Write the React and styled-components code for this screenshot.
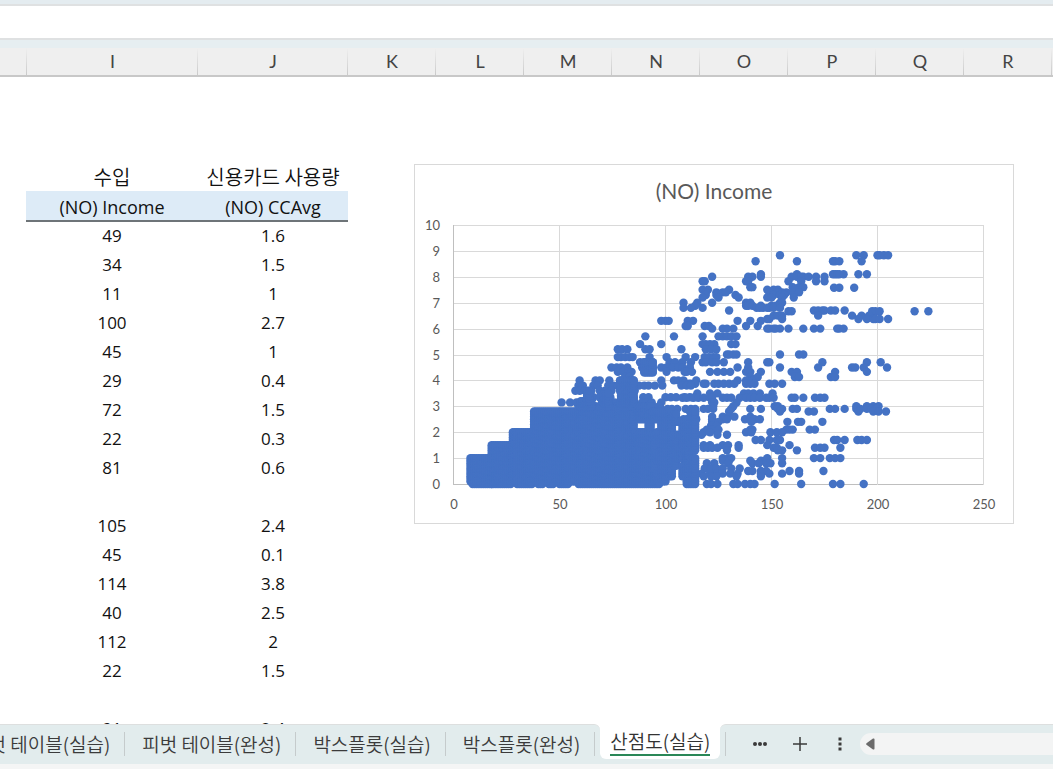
import React from 'react';
import styled, {createGlobalStyle} from 'styled-components';

const GlobalStyle = createGlobalStyle`
*{
box-sizing: border-box;
}
body{
margin: 0;
background-color: #FFFFFF;
font-family: 'Open Sans', 'Noto Sans CJK KR', sans-serif;
}
`
const Container = styled.div`
display: flex;
flex-flow: column;
height: 100vh;
width: 100%;
overflow: hidden;
background-color: #FFFFFF;
`
const RibbonEdge = styled.div`
flex: none;
height: 6px;
background-color: #E4ECF0;
border-bottom: solid 2px #DFE1E2;
`
const FormulaBar = styled.div`
flex: none;
height: 34px;
background-color: white;
border-bottom: solid 2px #DFE1E2;
`
const FormulaGap = styled.div`
flex: none;
height: 8px;
background-color: #E6EEF1;
`
const ColumnBar = styled.div`
display: flex;
flex: none;
height: 29px;
overflow: hidden;
background-color: #EFEFEF;
border-bottom: solid 2px #C8C8C8;
`
const ColumnHead = styled.div`
display: flex;
flex: none;
justify-content: center;
align-items: center;
width: ${props => props.$width}px;
color: #444444;
font-family: 'Lato', sans-serif;
font-size: 18px;
line-height: 27px;
background: linear-gradient(#EFEFEF, #CACACA) right / 1px 100% no-repeat;
`
const Sheet = styled.div`
display: flex;
flex: 1;
align-items: flex-start;
min-height: 0;
overflow: hidden;
padding-top: 85px;
`
const DataTable = styled.table`
flex: none;
margin-left: 26px;
border-collapse: collapse;
table-layout: fixed;
width: 322px;
color: #111111;
font-size: 17px;
line-height: 28px;
text-align: center;
`
const Row = styled.tr`
height: 29px;
`
const Caption = styled.th`
padding: 0;
width: ${props => props.$width}px;
font-family: 'Noto Sans CJK KR', sans-serif;
font-size: 20px;
font-weight: 350;
`
const Field = styled.th`
padding: 2px 0 0;
height: 30px;
font-size: 18px;
font-weight: 400;
line-height: 26px;
background-color: #DDEBF7;
border-bottom: solid 2px #6E7478;
`
const Cell = styled.td`
padding: 0;
`
const ChartBox = styled.div`
flex: none;
width: 600px;
margin-top: 2px;
margin-left: 66px;
border: solid 1px #D9D9D9;
background-color: white;
svg{
display: block;
width: 100%;
}
`
const ChartTitle = styled.h2`
margin: 0;
padding-top: 12px;
height: 47px;
color: #595959;
font-family: 'Lato', sans-serif;
font-size: 21px;
font-weight: 400;
line-height: 28px;
text-align: center;
`
const Tick = styled.text`
fill: #595959;
font-family: 'Lato', sans-serif;
font-size: 13px;
text-anchor: ${props => props.$anchor};
`
const TabBar = styled.div`
display: flex;
flex: none;
height: 40px;
overflow: hidden;
background: linear-gradient(#FFFFFF 12px, #E2ECED 12px);
`
const TabGroup = styled.div`
display: flex;
flex: none;
padding: 7px 5px 8px 0;
border-top: solid 1px #DDDFDF;
border-top-right-radius: 6px;
margin-left: -46px;
background-color: #E2ECED;
`
const Tab = styled.button`
height: 24px;
padding: 0 14px 0 17px;
border: none;
border-right: solid 1px #C5CBCC;
background: none;
color: #3B3B3B;
font-family: 'Noto Sans CJK KR', sans-serif;
font-size: 19px;
font-weight: 350;
line-height: 24px;
white-space: nowrap;
`
const ActiveTab = styled.button`
flex: none;
height: 35px;
padding: 4px 10px;
border: none;
border-radius: 0 0 6px 6px;
background-color: white;
color: #333333;
font-family: 'Noto Sans CJK KR', sans-serif;
font-size: 19px;
font-weight: 350;
line-height: 26px;
white-space: nowrap;
span{
display: block;
height: 28px;
border-bottom: solid 2px #2A8757;
}
`
const Tools = styled.div`
display: flex;
flex: 1;
align-items: center;
padding: 0 0 2px 5px;
border-top: solid 1px #DDDFDF;
border-top-left-radius: 6px;
background-color: #E2ECED;
`
const Divider = styled.div`
width: 1px;
height: 24px;
margin-right: 14px;
background-color: #C5CBCC;
`
const ToolButton = styled.button`
display: flex;
justify-content: center;
align-items: center;
width: 40px;
height: 24px;
padding: 0;
border: none;
background: none;
color: #3A3A3A;
`
const ScrollTrack = styled.div`
display: flex;
flex: 1;
align-items: center;
height: 22px;
padding-left: 6px;
border-radius: 11px 0 0 11px;
background-color: #F3F4F4;
`
const StatusEdge = styled.div`
flex: none;
height: 5px;
background-color: #F4F5F5;
`

const columns = [
    {name: '', width: 27}, {name: 'I', width: 171}, {name: 'J', width: 150}, {name: 'K', width: 88},
    {name: 'L', width: 88}, {name: 'M', width: 88}, {name: 'N', width: 88}, {name: 'O', width: 88},
    {name: 'P', width: 88}, {name: 'Q', width: 88}, {name: 'R', width: 88}, {name: '', width: 88}
];

const rows = [
    ['49', '1.6'], ['34', '1.5'], ['11', '1'], ['100', '2.7'], ['45', '1'], ['29', '0.4'],
    ['72', '1.5'], ['22', '0.3'], ['81', '0.6'], ['', ''], ['105', '2.4'], ['45', '0.1'],
    ['114', '3.8'], ['40', '2.5'], ['112', '2'], ['22', '1.5'], ['', ''], ['91', '2.4']
];

const tabs = ['피벗 테이블(실습)', '피벗 테이블(완성)', '박스플롯(실습)', '박스플롯(완성)'];

// [CCAvg, incomes with that CCAvg]
const points = [
    [8.83, [154, 190, 193.5, 200, 201, 203, 205]],
    [8.6, [142.5, 162, 179, 180, 182, 192.5]],
    [8.1, [145, 162, 179, 180, 181, 182, 184, 191, 195]],
    [8.0, [122, 139, 141, 145, 159.5, 162, 164, 165, 167.5, 171, 175]],
    [7.83, [117.5, 118.5, 138, 139, 158, 164, 171, 175]],
    [7.6, [140, 141, 160, 163, 165]],
    [7.58, [179.5, 182, 189]],
    [7.5, [117.5, 120, 130, 148, 151, 153, 161]],
    [7.4, [119, 124, 127, 128.5, 149, 151, 153, 155, 157, 160, 163]],
    [7.3, [119, 124, 133, 151, 154, 156]],
    [7.2, [117.5, 125, 134.5, 148, 150, 155, 160.5]],
    [7.0, [108.5, 115, 122, 138, 140, 154, 155]],
    [6.88, [114, 138, 139, 141, 145, 150, 152, 154]],
    [6.8, [108.5, 112, 117.5, 143, 144.5, 146, 148, 149, 151, 154]],
    [6.7, [130, 170, 172, 174, 175, 178, 180, 184.5]],
    [6.67, [158, 159.5, 197.5, 199, 201, 217.5, 224]],
    [6.5, [151, 153, 155, 172, 188, 192.5, 196]],
    [6.37, [148, 149, 155, 191, 195, 198, 199, 201, 205]],
    [6.3, [98, 100, 101.5, 110.5, 113, 134, 140, 145]],
    [6.1, [109.5, 110.5, 118.5, 120.5, 138, 143.5]],
    [6.0, [122, 127, 129, 132, 148, 149, 151, 152, 154, 158, 165, 170, 173, 181, 182, 184]],
    [5.7, [90.5, 104, 117.5, 125, 127, 129, 131, 133.5]],
    [5.4, [88, 98, 117.5, 119, 121, 123, 131, 133]],
    [5.2, [77.5, 79.5, 82, 90.5, 92.5, 107.5, 119, 121.5, 124]],
    [5.0, [129, 130, 132, 133.5, 154, 163, 165]],
    [4.9, [77.5, 79, 81, 83, 84.5, 92.5, 100.5, 109.5, 114, 118.5, 120.5, 122.5, 124]],
    [4.7, [88, 90, 92.5, 94, 102, 104.5, 108, 112, 117.5, 119, 122, 124, 127.5, 139, 148, 149, 174, 195, 201.5]],
    [4.5, [74.5, 77, 79, 82, 89, 91, 94, 98, 100.5, 103.5, 106, 108, 111.5, 134, 139, 154, 172, 188, 189.5, 193.5, 204.5]],
    [4.33, [77.5, 80, 82.5, 84, 90, 92.5, 94, 100.5, 109, 110, 112.5, 121, 124.5, 127.5, 130.5, 138, 140, 145, 159.5, 162, 180, 195]],
    [4.13, [81, 83, 140, 143.5, 161, 163, 178, 180]],
    [4.0, [59.5, 67, 69, 73.5, 78.5, 81, 83, 85, 98, 104, 106, 108.5, 114.5, 134, 138, 141]],
    [3.87, [109, 111, 112, 114, 118, 119, 123, 125, 127.5, 130, 132.5, 138, 140, 142, 149, 151.5, 155]],
    [3.8, [59, 61, 66, 68, 73, 75.5, 77.5, 80, 82, 85, 87.5, 90, 92, 95, 98.5, 107.5, 110, 112]],
    [3.6, [57.5, 59.5, 62, 65, 69, 71.5, 74.5, 78.5, 80, 82, 84, 85.5]],
    [3.5, [115, 121, 124.5, 137, 139, 141.5, 144.5, 150.5]],
    [3.35, [63.5, 66, 69, 72, 74, 80, 81, 83, 85, 89.5, 92, 100, 102.5, 105, 109, 111.5, 114]],
    [3.33, [108, 110, 113, 115.5, 118, 121, 122, 127, 129, 131, 135, 138, 140, 142, 144.5, 147.5, 149, 151, 159.5, 161, 165, 170.5, 173, 175]],
    [3.15, [51, 55, 58, 61, 63, 65, 70, 74, 76, 80, 82, 84, 85.5, 89, 91, 93.5, 98, 122, 123, 133.5]],
    [3.0, [59, 61, 63, 65, 67, 69, 71, 73, 75, 77, 79, 81, 83, 85, 88, 90, 92, 94, 97, 122.5, 132, 151.5, 153, 190, 195, 198, 200.5]],
    [2.9, [98, 101, 103, 105.5, 109.5, 112, 114, 118, 120, 122.5, 131, 140, 145, 153, 155, 160, 162, 177.5, 180, 184.5, 190, 192, 195, 197, 199.5]],
    [2.8, [111.5, 114, 130, 154, 167.5, 170, 191, 198, 200.5, 204]],
    [2.6, [122, 127, 129.5, 132.5, 140]],
    [2.5, [108.5, 111.5, 114.5, 122, 127, 129, 137.5, 140, 142, 144.5]],
    [2.4, [122, 125, 140.5, 157.5, 162.5, 164, 174]],
    [2.25, [121.5, 124]],
    [2.1, [119.5, 122, 125, 140, 141, 157, 158.5, 160, 168, 170.5]],
    [2.0, [118, 121, 138, 140.5, 149.5, 152.5, 155]],
    [1.9, [117, 124.5, 129]],
    [1.7, [142.5, 145, 149, 152.5, 154, 179.5, 181, 184.5, 190.5, 192.5, 195]],
    [1.5, [118, 121, 127, 129.5, 134.5, 148, 158.5]],
    [1.4, [118, 120, 122, 124.5, 129, 134.5, 151, 152.5, 170.5, 173, 175, 182.5]],
    [1.3, [129, 153, 155, 162]],
    [1.0, [127, 129.5, 131, 148, 155, 170, 173, 177.5, 180, 182.5]],
    [0.9, [127, 130, 140, 145, 147]],
    [0.8, [119.5, 123, 129.5, 141, 144, 147.5, 149.5, 155]],
    [0.6, [118.5, 121.5, 124, 127, 131, 135]],
    [0.5, [139, 141, 145, 147.5, 158.5, 163, 174.5]],
    [0.4, [117, 121, 124, 127, 130.5, 134, 145, 149, 155, 163]],
    [0.3, [118, 121.5, 124, 133.5, 145]],
    [0, [119.5, 121.5, 124.5, 132, 134, 137.5, 140, 142, 151.5, 164, 179, 182.5, 193.5]]
];

// crowded part of the data: every income in the range, from low to high CCAvg
const clusters = [
    {from: 8, to: 9, low: 0.1, high: 1},
    {from: 9, to: 18, low: 0, high: 1},
    {from: 18, to: 27, low: 0, high: 1.5},
    {from: 28, to: 30, low: 0.1, high: 2},
    {from: 30, to: 37, low: 0, high: 2},
    {from: 38, to: 39, low: 0.1, high: 2.8},
    {from: 40, to: 42, low: 0, high: 2.8},
    {from: 43, to: 44, low: 0.1, high: 2.8},
    {from: 45, to: 47, low: 0, high: 2.8},
    {from: 48, to: 49, low: 0.1, high: 2.8},
    {from: 50, to: 54, low: 0, high: 2.8},
    {from: 55, to: 58, low: 0.1, high: 2.8},
    {from: 59, to: 85, low: 0, high: 2.9},
    {from: 60, to: 65, low: 3, high: 3.2},
    {from: 63, to: 64, low: 3.2, high: 3.6},
    {from: 71, to: 73, low: 3, high: 3.5},
    {from: 79, to: 85, low: 3, high: 4},
    {from: 86, to: 91, low: 0, high: 2},
    {from: 87, to: 92, low: 2.5, high: 3},
    {from: 90, to: 94, low: 4.3, high: 4.7},
    {from: 92, to: 93, low: 0, high: 3},
    {from: 94, to: 95, low: 0, high: 1.9},
    {from: 94, to: 97, low: 2.5, high: 2.8},
    {from: 96, to: 97, low: 0, high: 0.4},
    {from: 96, to: 97, low: 0.9, high: 1.2},
    {from: 96, to: 97, low: 1.7, high: 2},
    {from: 98, to: 100, low: 0.1, high: 2.8},
    {from: 101, to: 103, low: 0.3, high: 2.8},
    {from: 104, to: 105, low: 0.7, high: 1.9},
    {from: 104, to: 105, low: 2.4, high: 2.7},
    {from: 106, to: 108, low: 1, high: 1.4},
    {from: 106, to: 108, low: 1.8, high: 1.9},
    {from: 106, to: 107, low: 2.4, high: 2.4},
    {from: 108, to: 109, low: 0.3, high: 0.7},
    {from: 108, to: 109, low: 1.2, high: 2.4},
    {from: 110, to: 111, low: 0, high: 2.5},
    {from: 112, to: 114, low: 0, high: 1},
    {from: 112, to: 114, low: 1.3, high: 2.8}
];

const toX = income => 38.5 + income * 2.12;
const toY = ccavg => 272 - ccavg * 25.9;

const dots = [];
points.forEach(([ccavg, incomes]) => {
    incomes.forEach(income => dots.push([toX(income), toY(ccavg)]));
});
clusters.forEach(c => {
    for (let income = c.from; income <= c.to; income++) {
        for (let v = Math.round(c.low * 10); v <= Math.round(c.high * 10); v++) {
            dots.push([toX(income), toY(v / 10)]);
        }
    }
});

const yTicks = [0, 1, 2, 3, 4, 5, 6, 7, 8, 9, 10];
const xTicks = [0, 50, 100, 150, 200, 250];

function ScatterChart() {
    return (
        <ChartBox>
            <ChartTitle>(NO) Income</ChartTitle>
            <svg viewBox="0 0 598 311" role="img" aria-label="(NO) Income">
                {yTicks.map(v => (
                    <line key={v} x1="38" x2="569" y1={Math.round(toY(v)) + 0.5} y2={Math.round(toY(v)) + 0.5}
                          stroke={v === 0 ? '#BFBFBF' : '#D9D9D9'}/>
                ))}
                {xTicks.map(v => (
                    <line key={v} x1={Math.floor(toX(v)) + 0.5} x2={Math.floor(toX(v)) + 0.5} y1="13" y2="273"
                          stroke={v === 0 ? '#BFBFBF' : '#D9D9D9'}/>
                ))}
                <g fill="#4472C4">
                    {dots.map(([x, y], index) => <circle key={index} cx={x} cy={y} r="4.2"/>)}
                </g>
                {yTicks.map(v => <Tick key={v} $anchor="end" x="25" y={Math.round(toY(v)) + 5}>{v}</Tick>)}
                {xTicks.map(v => <Tick key={v} $anchor="middle" x={Math.floor(toX(v)) + 1} y="297">{v}</Tick>)}
            </svg>
        </ChartBox>
    );
}

function App() {
    return (
        <Container>
            <GlobalStyle/>
            <RibbonEdge/>
            <FormulaBar/>
            <FormulaGap/>
            <ColumnBar>
                {columns.map((item, index) => (
                    <ColumnHead key={index} $width={item.width}>{item.name}</ColumnHead>
                ))}
            </ColumnBar>
            <Sheet>
                <DataTable>
                    <thead>
                        <Row>
                            <Caption $width={172}>수입</Caption>
                            <Caption $width={150}>신용카드 사용량</Caption>
                        </Row>
                        <Row>
                            <Field>(NO) Income</Field>
                            <Field>(NO) CCAvg</Field>
                        </Row>
                    </thead>
                    <tbody>
                        {rows.map((row, index) => (
                            <Row key={index}>
                                <Cell>{row[0]}</Cell>
                                <Cell>{row[1]}</Cell>
                            </Row>
                        ))}
                    </tbody>
                </DataTable>
                <ScatterChart/>
            </Sheet>
            <TabBar>
                <TabGroup>
                    {tabs.map(name => <Tab key={name}>{name}</Tab>)}
                </TabGroup>
                <ActiveTab><span>산점도(실습)</span></ActiveTab>
                <Tools>
                    <Divider/>
                    <ToolButton aria-label="more sheets">
                        <svg width="16" height="6" fill="currentColor">
                            <circle cx="3" cy="3" r="2"/>
                            <circle cx="8" cy="3" r="2"/>
                            <circle cx="13" cy="3" r="2"/>
                        </svg>
                    </ToolButton>
                    <ToolButton aria-label="new sheet">
                        <svg width="14" height="14" stroke="currentColor" strokeWidth="1.5">
                            <path d="M7 0V14M0 7H14"/>
                        </svg>
                    </ToolButton>
                    <ToolButton aria-label="resize tabs">
                        <svg width="4" height="14" fill="currentColor">
                            <rect x="0.5" y="0.5" width="3" height="3"/>
                            <rect x="0.5" y="5.5" width="3" height="3"/>
                            <rect x="0.5" y="10.5" width="3" height="3"/>
                        </svg>
                    </ToolButton>
                    <ScrollTrack>
                        <svg width="9" height="12" fill="#6B6B6B">
                            <path d="M0.5 5.2L7 0.6Q8.5 0 8.5 1.5V10.5Q8.5 12 7 11.4L0.5 6.8Q-0.2 6 0.5 5.2Z"/>
                        </svg>
                    </ScrollTrack>
                </Tools>
            </TabBar>
            <StatusEdge/>
        </Container>
    );
}

export default App;
